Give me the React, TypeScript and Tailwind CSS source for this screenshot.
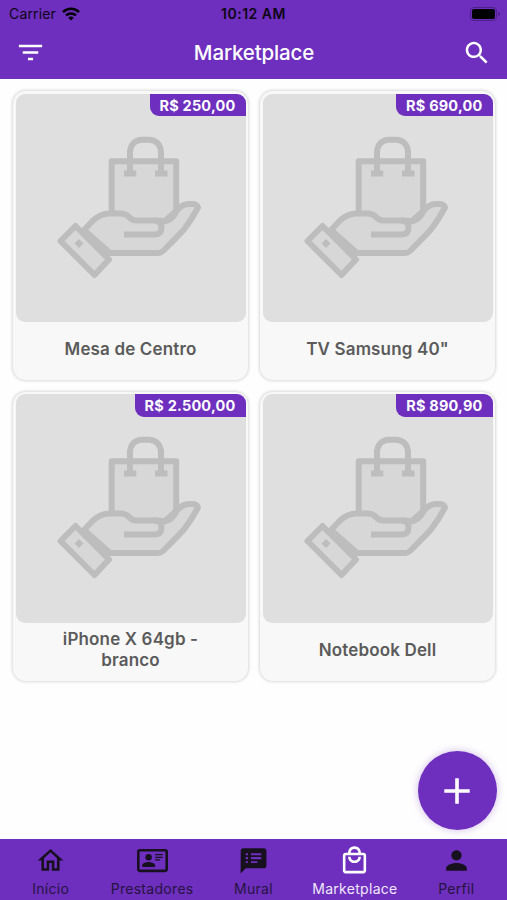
import React from "react";

const ICONS = {
  home: "M12 5.69L17 10.19V18H15V12H9V18H7V10.19L12 5.69M12 3L2 12H5V20H11V14H13V20H19V12H22L12 3",
  card: "M22,3H2C0.91,3.04 0.04,3.91 0,5V19C0.04,20.09 0.91,20.96 2,21H22C23.09,20.96 23.96,20.09 24,19V5C23.96,3.91 23.09,3.04 22,3M22,19H2V5H22V19M14,17V15.75C14,14.09 10.66,13.25 9,13.25C7.34,13.25 4,14.09 4,15.75V17H14M9,7A2.5,2.5 0 0,0 6.5,9.5A2.5,2.5 0 0,0 9,12A2.5,2.5 0 0,0 11.5,9.5A2.5,2.5 0 0,0 9,7M14,7V8H20V7H14M14,9V10H20V9H14M14,11V12H18V11H14",
  notes:
    "M20 2.500H4c-1.100 0-1.900.9-1.900 2L2 22l4-4h14c1.100 0 2-.9 2-2V4.500c0-1.100-.9-2-2-2zM7.700 14H6v-1.500h1.700v1.500zm0-3H6V9.300h1.700v1.700zm0-3H6V6.400h1.700v1.600zm7.300 6h-5v-1.500h5v1.500zm3-3h-8V9.300h8v1.700zm0-3h-8V6.400h8v1.600z",
  bag: "M19 6H17C17 3.2 14.8 1 12 1S7 3.2 7 6H5C3.9 6 3 6.9 3 8V20C3 21.1 3.9 22 5 22H19C20.1 22 21 21.1 21 20V8C21 6.9 20.1 6 19 6M12 3C13.7 3 15 4.3 15 6H9C9 4.3 10.3 3 12 3M19 20H5V8H19V20M12 12C10.3 12 9 10.7 9 9H7C7 11.8 9.2 14 12 14S17 11.8 17 9H15C15 10.7 13.7 12 12 12Z",
  person:
    "M12 12c2.21 0 4-1.79 4-4s-1.79-4-4-4-4 1.79-4 4 1.79 4 4 4zm0 2c-2.67 0-8 1.34-8 4v2h16v-2c0-2.66-5.33-4-8-4z",
  filter: "M10 18h4v-2h-4v2zM3 6v2h18V6H3zm3 7h12v-2H6v2z",
  search:
    "M15.5 14h-.79l-.28-.27C15.41 12.59 16 11.11 16 9.5 16 5.91 13.09 3 9.5 3S3 5.91 3 9.5 5.91 16 9.5 16c1.61 0 3.09-.59 4.23-1.57l.27.28v.79l5 4.99L20.49 19l-4.99-5zm-6 0C7.01 14 5 11.99 5 9.5S7.01 5 9.5 5 14 7.01 14 9.5 11.99 14 9.5 14z",
};

function Icon({ name, className }: { name: keyof typeof ICONS; className: string }) {
  return (
    <svg viewBox="0 0 24 24" fill="currentColor" className={className} aria-hidden="true">
      <path d={ICONS[name]} />
    </svg>
  );
}

function Placeholder() {
  return (
    <svg
      viewBox="0 0 180 165"
      className="h-[165px] w-[180px]"
      fill="#d7d7d7"
      stroke="#bdbdbd"
      strokeWidth="6"
      strokeLinejoin="round"
      aria-hidden="true"
    >
      <path d="M71.7 89V36.2H136.2V86L125 96H88Z" />
      <path d="M44 105L53 95.500Q61 88.500 69 88.500H80Q86 88.500 89 92Q92 95.500 96 95.500H116Q121 95.500 124 96.500Q132.500 95 136.500 86Q142 79 149 79H152Q157 79 158 82.500C154 90 149 98 144 104.500C139 110 132 117 126 123Q122 128 118 128H70Z" />
      <path d="M84 109.500H115Q121.500 109.500 121.500 102Q121.500 95.500 114 95.500" fill="none" />
      <path d="M20.500 116L35.500 101L69 134.500L54.500 150Z" />
      <path d="M90 48V28C90 20 95 14.700 102 14.700H109C116 14.700 121 20 121 28V48" fill="none" />
      <path d="M84 48.500H96.300M115 48.500H127.500" fill="none" />
      <path d="M39 114L43.500 118.500L39 123L34.500 118.500Z" fill="#bdbdbd" stroke="none" />
    </svg>
  );
}

const PRODUCTS = [
  { price: "R$ 250,00", title: "Mesa de Centro" },
  { price: "R$ 690,00", title: 'TV Samsung 40"' },
  { price: "R$ 2.500,00", title: "iPhone X 64gb - branco" },
  { price: "R$ 890,90", title: "Notebook Dell" },
];

function ProductCard({ price, title }: { price: string; title: string }) {
  return (
    <article className="flex h-[289px] flex-col rounded-[13px] bg-[#f8f8f8] px-[2.500px] pt-[2.500px] shadow-[0_0_3px_1px_rgba(0,0,0,0.15)]">
      <div className="flex h-[228.500px] shrink-0 flex-col overflow-hidden rounded-[9px] bg-[#dfdfdf]">
        <div className="flex h-[22.500px] shrink-0 items-center self-end rounded-bl-[9px] bg-[#6e2fbf] pt-[1.500px] pr-[10px] pl-[10px] text-[14.500px] font-bold tracking-[0.2px] whitespace-nowrap text-white">
          {price}
        </div>
        <div className="mt-[8.500px] ml-[24.500px]">
          <Placeholder />
        </div>
      </div>
      <div className="flex grow items-center justify-center px-[30px] pb-[2.500px]">
        <h2 className="text-center text-[17px] leading-[21px] font-semibold tracking-[0.15px] text-[#5b5b5b]">{title}</h2>
      </div>
    </article>
  );
}

const TABS: { icon: keyof typeof ICONS; label: string; active?: boolean }[] = [
  { icon: "home", label: "Início" },
  { icon: "card", label: "Prestadores" },
  { icon: "notes", label: "Mural" },
  { icon: "bag", label: "Marketplace", active: true },
  { icon: "person", label: "Perfil" },
];

export default function App() {
  return (
    <div className="relative flex h-[900px] w-[507px] flex-col overflow-hidden bg-[#fefefe] font-[Inter,'Liberation_Sans',sans-serif]">
      <header className="h-[79px] shrink-0 bg-[#6e2fbf]">
        <div className="grid h-[27px] grid-cols-3 items-center pr-[7px] pl-[9px] text-[14px] text-[#0d0614]">
          <div className="flex items-center gap-[6px]">
            <span className="tracking-[0.15px]">Carrier</span>
            <svg viewBox="0 0 18 14" className="h-[14px] w-[18px]" fill="none" stroke="black" strokeWidth="2.500" aria-hidden="true">
              <path d="M1 5.200C5.500 0.700 12.500 0.700 17 5.200" />
              <path d="M4 8.400C6.800 5.700 11.200 5.700 14 8.400" />
              <path d="M9 13.500L6.200 10.700C7.800 9.200 10.200 9.200 11.800 10.700Z" fill="black" stroke="none" />
            </svg>
          </div>
          <span className="pr-[2px] text-center font-semibold tracking-[0.5px] whitespace-nowrap">10:12 AM</span>
          <div className="flex items-center justify-end gap-px">
            <div className="h-[14px] w-[27px] rounded-[4px] border border-[#4d208a] p-px">
              <div className="h-full w-full rounded-[2px] bg-black" />
            </div>
            <div className="h-[4px] w-[2px] rounded-r-full bg-[#4d208a]" />
          </div>
        </div>
        <div className="flex h-[51px] items-center justify-between pr-[15px] pl-[15px] text-white">
          <Icon name="filter" className="h-[31px] w-[31px]" />
          <h1 className="pt-px text-[20.500px] font-medium tracking-[-0.15px]">Marketplace</h1>
          <Icon name="search" className="h-[30px] w-[30px]" />
        </div>
      </header>

      <main className="grid grow grid-cols-[235px_235px] content-start gap-x-[12px] gap-y-[11.500px] pt-[12px] pl-[13px]">
        {PRODUCTS.map((p) => (
          <ProductCard key={p.title} {...p} />
        ))}
      </main>

      <button
        aria-label="Adicionar"
        className="absolute top-[751px] left-[417.500px] flex h-[79px] w-[79px] items-center justify-center rounded-full bg-[#6e2fbf] shadow-[0_0_7px_1px_rgba(110,47,191,0.25)]"
      >
        <svg viewBox="0 0 26 26" className="h-[26px] w-[26px]" stroke="white" strokeWidth="3.600" aria-hidden="true">
          <path d="M13 0.300V25.700M0.300 13H25.700" />
        </svg>
      </button>

      <nav className="grid h-[61px] shrink-0 grid-cols-5 bg-[#6e2fbf]">
        {TABS.map((t) => (
          <div
            key={t.label}
            className={
              t.active
                ? "flex flex-col items-center pt-[6px] text-white"
                : "flex flex-col items-center pt-[6px] text-[#17101f]"
            }
          >
            <Icon name={t.icon} className="h-[31px] w-[31px]" />
            <span
              className={
                t.active
                  ? "mt-[4px] text-[14px] leading-[18px] tracking-[0.3px] text-[#f0e8fa]"
                  : "mt-[4px] text-[14px] leading-[18px] tracking-[0.3px] text-[#26133e]"
              }
            >
              {t.label}
            </span>
          </div>
        ))}
      </nav>
    </div>
  );
}
